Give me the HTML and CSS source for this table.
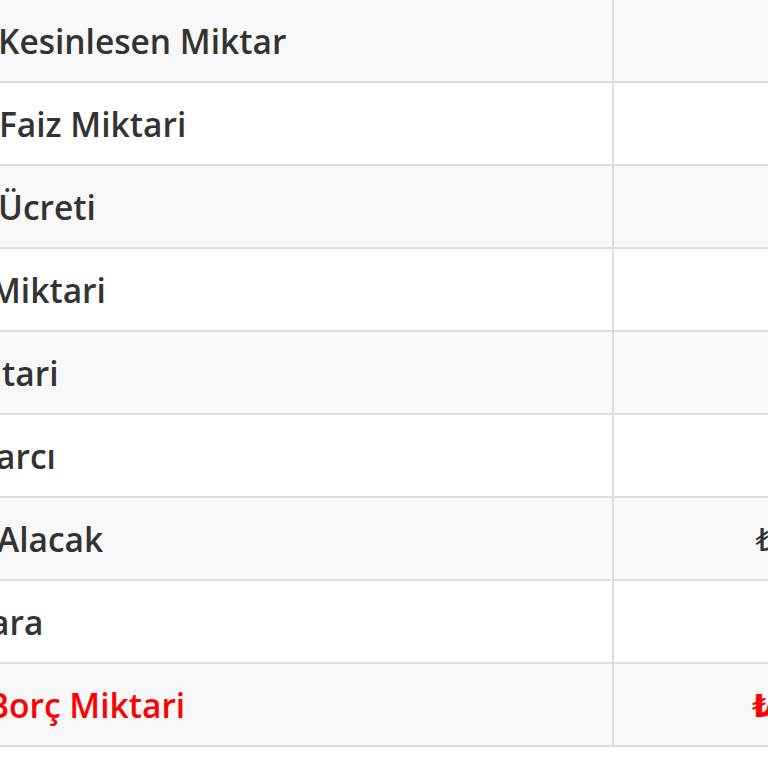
FILE: index.html
```html
<!DOCTYPE html>
<html lang="tr">
<head>
<meta charset="utf-8">
<link rel="stylesheet" href="styles.css">
</head>
<body>
<div class="table">
  <div class="row odd"><div class="label s-kesin">Kesinlesen Miktar</div><div class="value">₺4.250,00</div></div>
  <div class="row"><div class="label s-faiz">Faiz Miktari</div><div class="value">₺312,40</div></div>
  <div class="row odd"><div class="label s-ucret">Ücreti</div><div class="value">₺680,00</div></div>
  <div class="row"><div class="label s-miktar">Miktari</div><div class="value">₺115,50</div></div>
  <div class="row odd"><div class="label s-tari">tari</div><div class="value">₺72,60</div></div>
  <div class="row"><div class="label s-harc">arcı</div><div class="value">₺68,20</div></div>
  <div class="row odd"><div class="label s-alacak">Alacak</div><div class="value">₺125.498,70</div></div>
  <div class="row"><div class="label s-ara">ara</div><div class="value">₺45,00</div></div>
  <div class="row odd total"><div class="label s-borc">Borç Miktari</div><div class="value">₺125.543,70</div></div>
</div>
</body>
</html>
```
FILE: styles.css
```css
html, body {
  margin: 0;
  padding: 0;
  background: #fff;
  overflow: hidden;
  width: 768px;
  height: 768px;
}
.table {
  width: 1000px;
  font-family: "Open Sans", "DejaVu Sans", sans-serif;
  color: #333;
}
.row {
  display: grid;
  grid-template-columns: 614px 1fr;
  height: 81px;
  border-bottom: 2px solid #dedede;
  background: #fff;
}
.row.odd {
  background: #f8f8f8;
}
.label {
  display: flex;
  align-items: center;
  font-size: 33.5px;
  font-weight: 600;
  border-right: 2px solid #dedede;
  white-space: nowrap;
  overflow: hidden;
}
.s-kesin { text-indent: -2px; }
.s-faiz { text-indent: -1px; }
.s-ucret { text-indent: -2px; }
.s-miktar { text-indent: -10px; }
.s-tari { text-indent: 2px; }
.s-harc { text-indent: -4px; }
.s-alacak { text-indent: -3px; }
.s-ara { text-indent: -10px; }
.s-borc { text-indent: -13px; }
.value {
  display: flex;
  align-items: center;
  justify-content: flex-end;
  padding-right: 61px;
  font-size: 32px;
  font-weight: 400;
  white-space: nowrap;
}
.total .label,
.total .value {
  color: #f00;
}
.total .value {
  font-weight: 700;
}
```
